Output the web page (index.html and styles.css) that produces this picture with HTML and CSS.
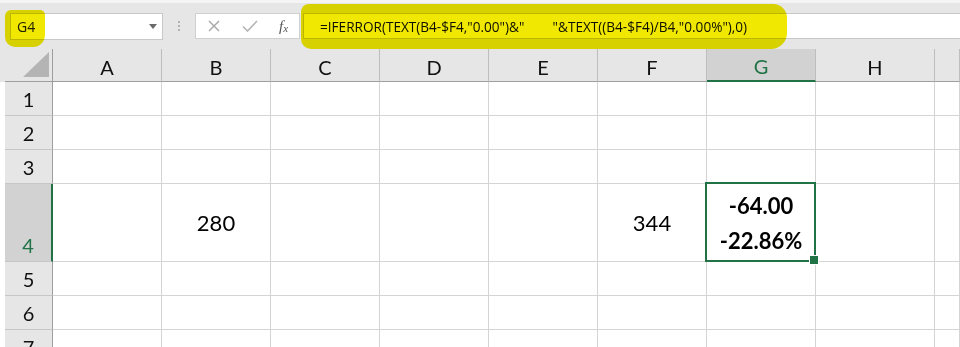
FILE: index.html
```html
<!DOCTYPE html>
<html lang="en">
<head>
    <meta charset="UTF-8">
    <meta name="viewport" content="width=device-width, initial-scale=1.0">
    <title>Sheet - G4</title>
    <link rel="stylesheet" href="styles.css">
</head>
<body>

    <div class="toolbar">
        <div class="name-box">
            <span class="name">G4</span>
            <span class="caret"></span>
        </div>
        <div class="grip"><i></i><i></i><i></i></div>
        <div class="fx-box">
            <svg class="btn-x" width="12" height="12" viewBox="0 0 12 12"><path d="M1 1L11 11M11 1L1 11" stroke="#a6a6a6" stroke-width="1.4" fill="none"/></svg>
            <svg class="btn-ok" width="16" height="12" viewBox="0 0 16 12"><path d="M1 6.5L5.5 11L15 1" stroke="#b4b4b4" stroke-width="1.6" fill="none"/></svg>
            <span class="fx">f<sub>x</sub></span>
        </div>
        <div class="formula">
            <span class="formula-text">=IFERROR(TEXT(B4-$F4,"0.00")&amp;"        "&amp;TEXT((B4-$F4)/B4,"0.00%"),0)</span>
        </div>

        <!-- marker highlights drawn over the bar -->
        <span class="mark mark-name"></span>
        <span class="mark mark-formula"></span>
    </div>

    <div class="sheet">
        <!-- header row -->
        <div class="corner"><svg width="26" height="25" viewBox="0 0 26 25"><polygon points="26,0 26,25 0,25" fill="#b4b4b4"/></svg></div>
        <div class="ch">A</div>
        <div class="ch">B</div>
        <div class="ch">C</div>
        <div class="ch">D</div>
        <div class="ch">E</div>
        <div class="ch">F</div>
        <div class="ch on">G</div>
        <div class="ch">H</div>
        <div class="ch"></div>

        <!-- row 1 -->
        <div class="rh">1</div>
        <div class="c"></div><div class="c"></div><div class="c"></div><div class="c"></div>
        <div class="c"></div><div class="c"></div><div class="c"></div><div class="c"></div><div class="c"></div>

        <!-- row 2 -->
        <div class="rh">2</div>
        <div class="c"></div><div class="c"></div><div class="c"></div><div class="c"></div>
        <div class="c"></div><div class="c"></div><div class="c"></div><div class="c"></div><div class="c"></div>

        <!-- row 3 -->
        <div class="rh">3</div>
        <div class="c"></div><div class="c"></div><div class="c"></div><div class="c"></div>
        <div class="c"></div><div class="c"></div><div class="c"></div><div class="c"></div><div class="c"></div>

        <!-- row 4 -->
        <div class="rh on">4</div>
        <div class="c"></div>
        <div class="c val">280</div>
        <div class="c"></div>
        <div class="c"></div>
        <div class="c"></div>
        <div class="c val">344</div>
        <div class="c val sel">
            <span>-64.00</span>
            <span>-22.86%</span>
        </div>
        <div class="c"></div>
        <div class="c"></div>

        <!-- row 5 -->
        <div class="rh">5</div>
        <div class="c"></div><div class="c"></div><div class="c"></div><div class="c"></div>
        <div class="c"></div><div class="c"></div><div class="c"></div><div class="c"></div><div class="c"></div>

        <!-- row 6 -->
        <div class="rh">6</div>
        <div class="c"></div><div class="c"></div><div class="c"></div><div class="c"></div>
        <div class="c"></div><div class="c"></div><div class="c"></div><div class="c"></div><div class="c"></div>

        <!-- row 7 -->
        <div class="rh">7</div>
        <div class="c"></div><div class="c"></div><div class="c"></div><div class="c"></div>
        <div class="c"></div><div class="c"></div><div class="c"></div><div class="c"></div><div class="c"></div>
    </div>

</body>
</html>
```

FILE: styles.css
```css
* {
    margin: 0;
    padding: 0;
    box-sizing: border-box;
}

body {
    font-family: Lato, "Liberation Sans", sans-serif;
    background-color: #ffffff;
    overflow: hidden;
}

/* formula bar */
.toolbar {
    position: relative;
    height: 49px;
    display: flex;
    align-items: flex-start;
    padding-top: 13px;
    background: linear-gradient(#f4f4f4 0, #f4f4f4 3px, #e6e6e6 3px);
}

.name-box {
    width: 153px;
    height: 27px;
    margin-left: 10px;
    display: flex;
    align-items: center;
    justify-content: space-between;
    padding: 0 5px 0 6px;
    background-color: #fff;
    border: 1px solid #c8c8c8;
}

.name {
    font-family: "Open Sans", "Noto Sans", sans-serif;
    font-size: 14px;
    color: #222;
}

.caret {
    border-left: 4px solid transparent;
    border-right: 4px solid transparent;
    border-top: 5px solid #6a6a6a;
}

.grip {
    width: 2px;
    margin: 8px 0 0 15px;
    display: flex;
    flex-direction: column;
    gap: 2px;
}

.grip i {
    display: block;
    width: 2px;
    height: 2px;
    background-color: #b2b2b2;
}

.fx-box {
    width: 105px;
    height: 26px;
    margin-left: 15px;
    display: flex;
    align-items: center;
    padding-left: 12px;
    background-color: #fff;
    border: 1px solid #d0d0d0;
}

.btn-ok {
    margin-left: 22px;
}

.fx {
    margin-left: 21px;
    font-family: "Liberation Serif", serif;
    font-style: italic;
    font-size: 15px;
    color: #555;
}

.fx sub {
    font-size: 11px;
    vertical-align: -1px;
}

.formula {
    flex: 1;
    height: 26px;
    margin-left: 3px;
    display: flex;
    align-items: center;
    padding-left: 16px;
    background-color: #fff;
    border: 1px solid #c8c8c8;
    border-right: none;
}

.formula-text {
    white-space: pre;
    font-family: "Open Sans", "Noto Sans", sans-serif;
    font-size: 13.6px;
    color: #111;
}

.mark {
    position: absolute;
    background-color: #f0e800;
    mix-blend-mode: multiply;
}

.mark-name {
    left: 5px;
    top: 10px;
    width: 40px;
    height: 37px;
    border-radius: 6px 5px 12px 10px;
}

.mark-formula {
    left: 301px;
    top: 4px;
    width: 486px;
    height: 45px;
    border-radius: 8px 14px 16px 10px;
}

/* grid */
.sheet {
    display: grid;
    grid-template-columns: 48px repeat(7, 109px) 119px 1fr;
    grid-template-rows: 33px repeat(3, 34px) 78px repeat(3, 34px);
    padding-left: 5px;
    background: linear-gradient(#e6e6e6 0, #e6e6e6 33px, #fff 33px);
}

.corner {
    display: flex;
    align-items: flex-end;
    justify-content: flex-end;
    padding: 0 3px 4px 0;
    background-color: #e6e6e6;
    border-right: 1px solid #9e9e9e;
    border-bottom: 1px solid #9e9e9e;
}

.ch {
    display: flex;
    align-items: center;
    justify-content: center;
    padding-top: 3px;
    font-size: 20px;
    color: #111;
    background-color: #e6e6e6;
    border-right: 1px solid #bdbdbd;
    border-bottom: 1px solid #9e9e9e;
}

.ch.on {
    background-color: #d2d2d2;
    color: #217346;
    border-bottom: 2px solid #217346;
}

.rh {
    display: flex;
    align-items: flex-end;
    justify-content: center;
    padding-bottom: 4px;
    font-size: 20px;
    color: #111;
    background-color: #e6e6e6;
    border-right: 1px solid #9e9e9e;
    border-bottom: 1px solid #c6c6c6;
}

.rh.on {
    background-color: #d2d2d2;
    color: #217346;
    border-right: 2px solid #217346;
}

.c {
    border-right: 1px solid #d4d4d4;
    border-bottom: 1px solid #d4d4d4;
}

.val {
    display: flex;
    flex-direction: column;
    align-items: center;
    justify-content: center;
    font-size: 22px;
    color: #000;
}

.sel {
    position: relative;
    font-weight: bold;
    line-height: 35px;
}

.sel::after {
    content: "";
    position: absolute;
    top: -2px;
    left: -2px;
    right: -1px;
    bottom: -1px;
    border: 2px solid #217346;
}

.sel::before {
    content: "";
    position: absolute;
    right: -4px;
    bottom: -4px;
    width: 8px;
    height: 8px;
    background-color: #217346;
    border: 1px solid #fff;
    z-index: 1;
}
```
